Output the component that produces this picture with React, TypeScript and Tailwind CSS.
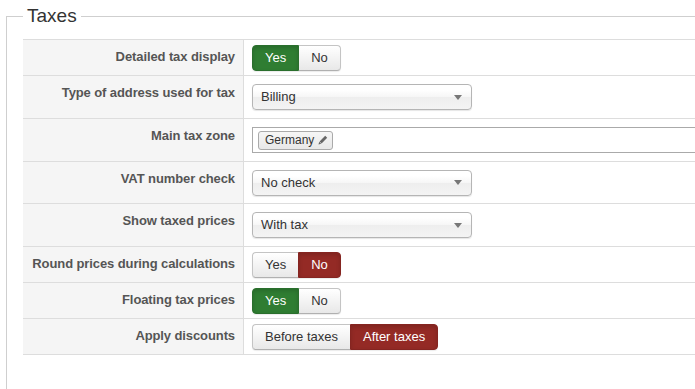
import React from "react"

type Row =
  | { label: string; kind: "toggle"; options: string[]; active: number; tone: "green" | "red"; h: number }
  | { label: string; kind: "select"; value: string; h: number }
  | { label: string; kind: "tags"; tags: string[]; h: number }

const rows: Row[] = [
  { label: "Detailed tax display", kind: "toggle", options: ["Yes", "No"], active: 0, tone: "green", h: 36 },
  { label: "Type of address used for tax", kind: "select", value: "Billing", h: 43 },
  { label: "Main tax zone", kind: "tags", tags: ["Germany"], h: 43 },
  { label: "VAT number check", kind: "select", value: "No check", h: 42 },
  { label: "Show taxed prices", kind: "select", value: "With tax", h: 43 },
  { label: "Round prices during calculations", kind: "toggle", options: ["Yes", "No"], active: 1, tone: "red", h: 36 },
  { label: "Floating tax prices", kind: "toggle", options: ["Yes", "No"], active: 0, tone: "green", h: 36 },
  { label: "Apply discounts", kind: "toggle", options: ["Before taxes", "After taxes"], active: 1, tone: "red", h: 36 },
]

function Toggle({ options, active, tone }: { options: string[]; active: number; tone: "green" | "red" }) {
  return (
    <div className="flex h-[26px] rounded-[4px] shadow-[0_1px_1px_rgba(0,0,0,0.08)]">
      {options.map((opt, i) => {
        const on = i === active
        const first = i === 0
        const last = i === options.length - 1
        const shape = `${first ? "rounded-l-[4px]" : ""} ${last ? "rounded-r-[4px]" : ""}`
        if (on) {
          return (
            <div
              key={opt}
              className={`flex items-center px-[12px] text-[13px] text-white shadow-[inset_0_2px_4px_rgba(0,0,0,0.15)] ${shape} ${
                tone === "green" ? "bg-[#2f7d32] border border-[#2a6f2d]" : "bg-[#942a25] border border-[#852521]"
              }`}
            >
              {opt}
            </div>
          )
        }
        return (
          <div
            key={opt}
            className={`flex items-center px-[12px] text-[13px] text-[#333] border border-[#c4c4c4] border-b-[#b0b0b0] bg-gradient-to-b from-white to-[#e8e8e8] ${shape} ${
              first ? "" : "border-l-0"
            } ${last ? "" : "border-r-0"}`}
          >
            {opt}
          </div>
        )
      })}
    </div>
  )
}

function Select({ value }: { value: string }) {
  return (
    <div className="flex h-[26px] w-[220px] items-center justify-between rounded-[4px] border border-[#b5b5b5] bg-[linear-gradient(#ffffff_20%,#f6f6f6_50%,#eeeeee_52%,#f4f4f4_100%)] pl-[8px] pr-[9px] text-[13px] text-[#333] shadow-[0_1px_1px_rgba(0,0,0,0.1)]">
      <span>{value}</span>
      <svg width="8" height="5" viewBox="0 0 8 5">
        <path d="M0 0h8L4 5z" fill="#777" />
      </svg>
    </div>
  )
}

function Pencil() {
  return (
    <svg width="10" height="10" viewBox="0 0 10 10">
      <path d="M7.2 0.8l2 2-5.6 5.6-2-2z" fill="#666" />
      <path d="M1.2 6.8l2 2-2.7 0.7z" fill="#666" />
    </svg>
  )
}

function Tags({ tags }: { tags: string[] }) {
  return (
    <div className="flex h-[26px] w-[460px] items-center gap-1 border border-[#aaa] bg-white pl-[5px]">
      {tags.map((t) => (
        <div
          key={t}
          className="flex h-[19px] items-center gap-[4px] rounded-[3px] border border-[#aaa] bg-gradient-to-b from-[#f6f6f6] to-[#e8e8e8] pl-[6px] pr-[4px] text-[12px] text-[#333]"
        >
          <span>{t}</span>
          <Pencil />
        </div>
      ))}
    </div>
  )
}

export default function App() {
  return (
    <div className="h-[389px] w-[695px] overflow-hidden bg-white font-['Liberation_Sans',Arial,sans-serif]">
      <fieldset className="ml-[6px] mt-[4px] min-h-[420px] w-[720px] border border-[#cfcfcf] pl-[16px]">
        <legend className="px-[4px] text-[19px] leading-[24px] text-[#333]">Taxes</legend>
        <div className="mt-[11px] border-b border-[#ddd]">
          {rows.map((row) => (
            <div key={row.label} className="flex border-t border-[#ddd]" style={{ height: row.h }}>
              <div className="w-[221px] shrink-0 border-r border-[#ddd] bg-[#f5f5f5] pr-[8px] pt-[7px] text-right text-[13px] font-bold leading-[20px] tracking-[-0.1px] text-[#555]">
                {row.label}
              </div>
              <div className="flex flex-1 items-center pl-[8px]">
                {row.kind === "toggle" && <Toggle options={row.options} active={row.active} tone={row.tone} />}
                {row.kind === "select" && <Select value={row.value} />}
                {row.kind === "tags" && <Tags tags={row.tags} />}
              </div>
            </div>
          ))}
        </div>
      </fieldset>
    </div>
  )
}
